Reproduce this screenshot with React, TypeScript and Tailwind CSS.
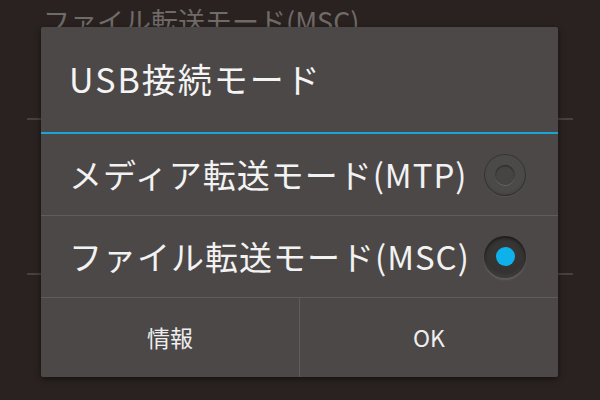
import React from 'react';

const font = { fontFamily: '"Noto Sans CJK JP", "Noto Sans", sans-serif' };

const Radio: React.FC<{ checked?: boolean }> = ({ checked }) => (
  <div
    className={
      checked
        ? 'w-[42px] h-[42px] rounded-full flex items-center justify-center bg-[radial-gradient(circle_at_50%_40%,#3a3737_0%,#353232_60%,#4f4c4b_100%)] shadow-[0_2px_2px_rgba(255,255,255,0.12),inset_0_2px_3px_rgba(0,0,0,0.5)]'
        : 'w-[42px] h-[42px] rounded-full flex items-center justify-center bg-[#4c4949] shadow-[0_1px_1px_rgba(255,255,255,0.06),inset_0_0_0_1px_rgba(0,0,0,0.25),inset_0_-2px_3px_rgba(0,0,0,0.15)]'
    }
  >
    {checked ? (
      <div className="w-[19px] h-[19px] rounded-full bg-[#0fb1ea]" />
    ) : (
      <div className="w-[20px] h-[20px] rounded-full bg-[#474444] shadow-[inset_0_1px_2px_rgba(0,0,0,0.45),0_1px_0_rgba(255,255,255,0.15)]" />
    )}
  </div>
);

const App: React.FC = () => {
  return (
    <div className="relative w-[600px] h-[400px] overflow-hidden bg-[#2a2220]" style={font}>
      {/* list behind the dialog */}
      <div className="flex flex-col px-[27px]">
        <div className="h-[118px] pl-[16px] pt-[1px] text-[27px] leading-[40px] text-[#6f6b69] whitespace-nowrap">
          ファイル転送モード(MSC)
        </div>
        <div className="h-[2px] bg-[#46403e]" />
        <div className="h-[153px]" />
        <div className="h-[2px] bg-[#46403e]" />
      </div>

      {/* dialog */}
      <div className="absolute left-[41px] top-[27px] w-[517px] h-[350px] flex flex-col rounded-[2px] bg-[#4b4847] shadow-[0_2px_6px_rgba(0,0,0,0.5)]">
        <div className="h-[105px] flex items-center pl-[28px] pb-[2px] text-[34px] tracking-[2px] text-[#f4f4f4] whitespace-nowrap">
          USB接続モード
        </div>
        <div className="h-[2px] bg-[#1aa5d4]" />
        <div className="h-[81px] flex items-center justify-between pl-[28px] pr-[32px]">
          <span className="text-[33px] tracking-[1px] text-[#f2f2f2] whitespace-nowrap">メディア転送モード(MTP)</span>
          <Radio />
        </div>
        <div className="h-px bg-[#5f5c5a]" />
        <div className="h-[81px] flex items-center justify-between pl-[28px] pr-[32px]">
          <span className="text-[33px] tracking-[1px] text-[#f2f2f2] whitespace-nowrap">ファイル転送モード(MSC)</span>
          <Radio checked />
        </div>
        <div className="h-px bg-[#5f5c5a]" />
        <div className="flex-1 flex">
          <div className="flex-1 flex items-center justify-center text-[23px] text-[#eeeeee]">情報</div>
          <div className="w-px bg-[#5f5c5a]" />
          <div className="flex-1 flex items-center justify-center text-[23px] text-[#eeeeee]">OK</div>
        </div>
      </div>
    </div>
  );
};

export default App;
